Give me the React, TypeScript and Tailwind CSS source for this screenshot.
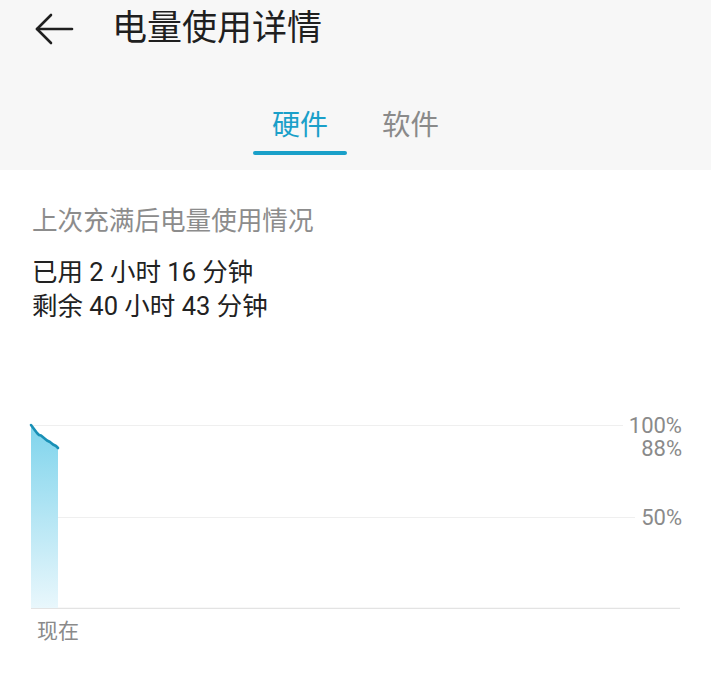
const font = { fontFamily: 'Roboto, "Noto Sans CJK SC", sans-serif' };

function BackArrow() {
  return (
    <svg width="40" height="34" viewBox="0 0 40 34" fill="none" stroke="#1f1f1f" strokeWidth="2.6" strokeLinecap="round" strokeLinejoin="round">
      <path d="M38 17H3" />
      <path d="M17 3L3 17l14 14" />
    </svg>
  );
}

function UsageChart() {
  // 电量曲线（只有最开始的一小段）
  const pts = '0,0 3,4 6,8 8,10 10,10.5 13,13 16,15.5 19,17 22,19.5 25,21 27,23';
  return (
    <div className="relative mt-[86px] h-[240px]">
      <svg className="absolute left-0 top-0" width="680" height="200" viewBox="0 0 680 200">
        <defs>
          <linearGradient id="fill" x1="0" y1="0" x2="0" y2="1">
            <stop offset="0%" stopColor="#7fd4ec" />
            <stop offset="100%" stopColor="#e9f7fc" />
          </linearGradient>
        </defs>
        <g transform="translate(0,16)">
          <line x1="31" y1="0.5" x2="623" y2="0.5" stroke="#efefef" strokeWidth="1" />
          <line x1="31" y1="92.5" x2="635" y2="92.5" stroke="#efefef" strokeWidth="1" />
          <line x1="31" y1="183.5" x2="680" y2="183.5" stroke="#e3e3e3" strokeWidth="1.5" />
          <g transform="translate(31,0)">
            <polygon points={`${pts} 27,183 0,183`} fill="url(#fill)" />
            <polyline points={pts} fill="none" stroke="#1990b6" strokeWidth="2.6" strokeLinejoin="round" strokeLinecap="round" />
          </g>
        </g>
      </svg>
      <div className="absolute right-[29px] top-[5px] text-right text-[22px] leading-[23px] text-[#8a8a8a]">
        <div>100%</div>
        <div>88%</div>
      </div>
      <div className="absolute right-[29px] top-[97px] text-[22px] leading-[24px] text-[#8a8a8a]">50%</div>
      <div className="absolute left-[37px] top-[210px] text-[21px] leading-[24px] text-[#8a8a8a]">现在</div>
    </div>
  );
}

export default function App() {
  return (
    <div className="w-[711px] h-[677px] bg-white overflow-hidden" style={font}>
      {/* Header */}
      <header className="bg-[#f7f7f7] h-[170px]">
        <div className="flex items-center h-[58px] pl-[34px]">
          <BackArrow />
          <h1 className="ml-[38px] text-[35px] text-[#1f1f1f]">电量使用详情</h1>
        </div>
        <div className="flex items-start gap-[35px] mt-[48px] pl-[253px]">
          <div className="flex flex-col items-center w-[94px]">
            <span className="text-[28px] leading-[40px] text-[#1aa0c9]">硬件</span>
            <div className="mt-[5px] h-[4px] w-[94px] rounded-full bg-[#1aa0c9]" />
          </div>
          <span className="text-[28.5px] leading-[40px] text-[#8a8a8a]">软件</span>
        </div>
      </header>

      {/* 统计信息 */}
      <section className="pt-[35px]">
        <p className="pl-[32px] text-[25.6px] leading-[32px] text-[#8c8c8c]">上次充满后电量使用情况</p>
        <div className="pl-[32px] mt-[18px] text-[25.5px] leading-[34px] text-[#222222]">
          <p>已用 2 小时 16 分钟</p>
          <p>剩余 40 小时 43 分钟</p>
        </div>
        <UsageChart />
      </section>
    </div>
  );
}
